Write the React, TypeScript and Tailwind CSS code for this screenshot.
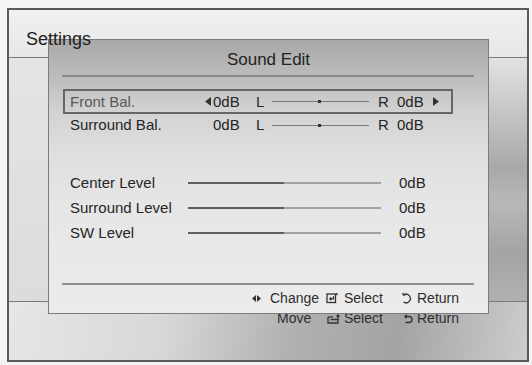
const font = "font-['Liberation_Sans',Arial,Helvetica,sans-serif]";

function TriLeft({ className = "" }: { className?: string }) {
  return (
    <svg width="6" height="9" viewBox="0 0 6 9" className={className}>
      <polygon points="6,0 6,9 0,4.5" fill="#333" />
    </svg>
  );
}

function TriRight({ className = "" }: { className?: string }) {
  return (
    <svg width="6" height="9" viewBox="0 0 6 9" className={className}>
      <polygon points="0,0 0,9 6,4.5" fill="#333" />
    </svg>
  );
}

function SelectIcon({ variant }: { variant: 1 | 2 }) {
  if (variant === 1) {
    return (
      <svg width="12" height="12" viewBox="0 0 12 12" fill="none" stroke="#333" strokeWidth="1.3">
        <rect x="1" y="2" width="8.5" height="8.5" />
        <path d="M7.5 4.2v2.6H3.8M5.2 5.4 3.8 6.8l1.4 1.4" />
        <path d="M10.8 1v2.2" />
      </svg>
    );
  }
  return (
    <svg width="13" height="12" viewBox="0 0 13 12" fill="none" stroke="#333" strokeWidth="1.3">
      <path d="M1 5v6h10V7" />
      <path d="M1 5h5" />
      <path d="M3.5 7.5h7.5V3M9.5 4.5 11 3l1.5 1.5" />
    </svg>
  );
}

function ReturnIcon({ variant }: { variant: 1 | 2 }) {
  if (variant === 1) {
    return (
      <svg width="11" height="12" viewBox="0 0 11 12" fill="none" stroke="#333" strokeWidth="1.3">
        <path d="M2.5 3A4.3 4.3 0 1 1 2.5 10" />
        <path d="M1.5 1.2 2.6 3.1 4.8 2.6" />
      </svg>
    );
  }
  return (
    <svg width="11" height="12" viewBox="0 0 11 12" fill="none" stroke="#333" strokeWidth="1.3">
      <path d="M2 4.5h4a3 3 0 0 1 0 6H2.5" />
      <path d="M3.6 2.8 2 4.5l1.6 1.7" />
    </svg>
  );
}

function BalanceRow({ label, selected }: { label: string; selected?: boolean }) {
  return (
    <div
      className={`flex items-center w-[390px] pl-[5px] ${
        selected ? "h-[25px] border-2 border-[#666]" : "h-[22px] border-x-2 border-transparent"
      }`}
    >
      <span className={`w-[135px] ${selected ? "text-[#585858]" : "text-[#262626]"}`}>{label}</span>
      <span className="w-[8px] flex items-center">{selected && <TriLeft />}</span>
      <span className="w-[43px]">0dB</span>
      <span className="w-[16px]">L</span>
      <span className="relative w-[97px] h-[1px] bg-[#777]">
        <span className="absolute left-[46px] top-[-1px] w-[3px] h-[3px] bg-[#333]" />
      </span>
      <span className="ml-[9px] w-[19px]">R</span>
      <span className="w-[36px]">0dB</span>
      <span className="flex items-center">{selected && <TriRight />}</span>
    </div>
  );
}

function LevelRow({ label }: { label: string }) {
  return (
    <div className="flex items-center h-[20px] pl-[7px]">
      <span className="w-[118px]">{label}</span>
      <span className="flex w-[193px] h-[2px]">
        <span className="w-[96px] bg-[#5e5e5e]" />
        <span className="flex-1 bg-[#a2a2a2]" />
      </span>
      <span className="ml-[18px]">0dB</span>
    </div>
  );
}

export default function App() {
  return (
    <div className={`w-[532px] h-[365px] bg-[#f4f4f4] pt-[8px] pl-[7px] ${font}`}>
      <div className="relative w-[522px] h-[354px] border-2 border-[#5a5a5a] flex flex-col">
        {/* background layer */}
        <div className="h-[47px] bg-[linear-gradient(to_bottom,#f1f1f1,#e7e7e7)] pl-[17px] pt-[18px]">
          <span className="relative z-10 text-[18px] leading-none text-[#1e1e1e]">Settings</span>
        </div>
        <div className="h-[1px] bg-[#7a7a7a]" />
        <div className="h-[243px] flex">
          <div className="w-[39px] bg-[linear-gradient(to_bottom,#e4e4e4,#dcdcdc)]" />
          <div className="flex-1 bg-[#d8d8d8]" />
          <div className="w-[40px] bg-[linear-gradient(to_bottom,#e2e2e2_0%,#c8c8c8_20%,#a9a9a9_45%,#b8b8b8_60%,#a4a4a4_80%,#b0b0b0_100%)]" />
        </div>
        <div className="h-[1px] bg-[#7a7a7a]" />
        <div className="flex-1 bg-[linear-gradient(100deg,#e6e6e6_0%,#d8d8d8_30%,#b0b0b0_55%,#a4a4a4_75%,#cdcdcd_100%)] pl-[268px] pt-[8px]">
          <div className="flex items-center text-[14px] leading-[16px] text-[#2e2e2e]">
            <span className="w-[50px]">Move</span>
            <span className="w-[17px] flex"><SelectIcon variant={2} /></span>
            <span className="w-[59px]">Select</span>
            <span className="w-[14px] flex"><ReturnIcon variant={2} /></span>
            <span>Return</span>
          </div>
        </div>

        {/* dialog */}
        <div className="absolute left-[39px] top-[29px] w-[441px] h-[275px] border border-[#7c7c7c] bg-[linear-gradient(to_bottom,#a8a8a8_0%,#bdbdbd_14%,#d2d2d2_26%,#dedede_40%,#e6e6e6_60%,#ececec_100%)] flex flex-col text-[#262626]">
          <div className="h-[35px] pt-[10px] text-center text-[17px] leading-[20px] text-[#222]">Sound Edit</div>
          <div className="ml-[13px] mr-[14px] h-[2px] bg-[#8a8a8a]" />
          <div className="ml-[14px] mt-[12px] flex flex-col text-[15px] leading-[18px]">
            <BalanceRow label="Front Bal." selected />
            <BalanceRow label="Surround Bal." />
            <div className="mt-[37px] flex flex-col gap-[5px]">
              <LevelRow label="Center Level" />
              <LevelRow label="Surround Level" />
              <LevelRow label="SW Level" />
            </div>
          </div>
          <div className="mt-[40px] ml-[13px] mr-[14px] h-[2px] bg-[#8f8f8f]" />
          <div className="mt-[5px] pl-[203px] flex items-center text-[14px] leading-[16px] text-[#2e2e2e]">
            <span className="w-[18px] flex items-center gap-[1px]">
              <svg width="4" height="7" viewBox="0 0 4 7"><polygon points="4,0 4,7 0,3.5" fill="#333" /></svg>
              <svg width="4" height="7" viewBox="0 0 4 7"><polygon points="0,0 0,7 4,3.5" fill="#333" /></svg>
            </span>
            <span className="w-[56px]">Change</span>
            <span className="w-[18px] flex"><SelectIcon variant={1} /></span>
            <span className="w-[57px]">Select</span>
            <span className="w-[16px] flex"><ReturnIcon variant={1} /></span>
            <span>Return</span>
          </div>
        </div>
      </div>
    </div>
  );
}
